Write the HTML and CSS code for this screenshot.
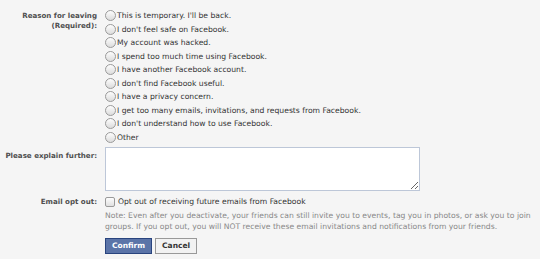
FILE: index.html
```html
<!DOCTYPE html>
<html lang="en">
<head>
    <meta charset="UTF-8">
    <title>Deactivate Account</title>
    <link rel="stylesheet" href="styles.css">
</head>
<body>
    <form class="deactivate">
        <div class="row">
            <div class="label reason-label">Reason for leaving<br>(Required):</div>
            <div class="reasons">
                <label class="option"><input type="radio" name="reason"><span>This is temporary. I'll be back.</span></label>
                <label class="option"><input type="radio" name="reason"><span>I don't feel safe on Facebook.</span></label>
                <label class="option"><input type="radio" name="reason"><span>My account was hacked.</span></label>
                <label class="option"><input type="radio" name="reason"><span>I spend too much time using Facebook.</span></label>
                <label class="option"><input type="radio" name="reason"><span>I have another Facebook account.</span></label>
                <label class="option"><input type="radio" name="reason"><span>I don't find Facebook useful.</span></label>
                <label class="option"><input type="radio" name="reason"><span>I have a privacy concern.</span></label>
                <label class="option"><input type="radio" name="reason"><span>I get too many emails, invitations, and requests from Facebook.</span></label>
                <label class="option"><input type="radio" name="reason"><span>I don't understand how to use Facebook.</span></label>
                <label class="option"><input type="radio" name="reason"><span>Other</span></label>
            </div>
        </div>

        <div class="row explain">
            <div class="label">Please explain further:</div>
            <div><textarea></textarea></div>
        </div>

        <div class="row optout">
            <div class="label">Email opt out:</div>
            <div>
                <label class="option"><input type="checkbox"><span>Opt out of receiving future emails from Facebook</span></label>
                <p class="note">Note: Even after you deactivate, your friends can still invite you to events, tag you in photos, or ask you to join groups. If you opt out, you will NOT receive these email invitations and notifications from your friends.</p>
            </div>
        </div>

        <div class="row">
            <div></div>
            <div class="buttons">
                <button type="button" class="confirm">Confirm</button>
                <button type="button" class="cancel">Cancel</button>
            </div>
        </div>
    </form>
</body>
</html>
```

FILE: styles.css
```css
body {
    margin: 0;
    background-color: #f5f5f5;
    font-family: 'DejaVu Sans', sans-serif;
    font-size: 7.65px;
    color: #333;
}
.deactivate {
    padding-top: 9px;
}
.row {
    display: grid;
    grid-template-columns: 97px 1fr;
    column-gap: 8px;
}
.label {
    text-align: right;
    font-weight: bold;
    font-size: 7.1px;
    color: #4f4f4f;
    line-height: 10px;
}
.reason-label {
    padding-top: 2px;
}
.option {
    display: flex;
    align-items: center;
    height: 13.5px;
}
.option span {
    margin-left: 1px;
}
input[type="radio"] {
    appearance: none;
    margin: 0;
    width: 11px;
    height: 11px;
    border: 1px solid #9a9a9a;
    border-radius: 50%;
    background: linear-gradient(#fdfdfd, #dcdcdc);
    box-sizing: border-box;
}
input[type="checkbox"] {
    appearance: none;
    margin: 0 2px 0 0;
    width: 10px;
    height: 10px;
    border: 1px solid #9a9a9a;
    border-radius: 2px;
    background: linear-gradient(#fdfdfd, #e0e0e0);
    box-sizing: border-box;
}
.explain {
    margin-top: 3px;
}
.explain .label {
    padding-top: 4px;
}
textarea {
    display: block;
    width: 315px;
    height: 44px;
    border: 1px solid #bdc7d8;
    background: #fff;
    box-sizing: border-box;
    margin: 0;
}
.optout {
    margin-top: 4px;
}
.optout .label {
    padding-top: 2px;
}
.note {
    margin: 1px 0 0;
    color: #888;
    line-height: 11px;
    padding-right: 6px;
}
.buttons {
    display: flex;
    gap: 3px;
    margin-top: 6px;
}
button {
    font-family: 'DejaVu Sans', sans-serif;
    font-size: 7.5px;
    font-weight: bold;
    height: 16px;
    padding: 0 6px;
    cursor: pointer;
}
.confirm {
    background-color: #5b74a8;
    color: #fff;
    border: 1px solid #29447e;
}
.cancel {
    background-color: #f2f2f2;
    color: #333;
    border: 1px solid #999;
}
```
